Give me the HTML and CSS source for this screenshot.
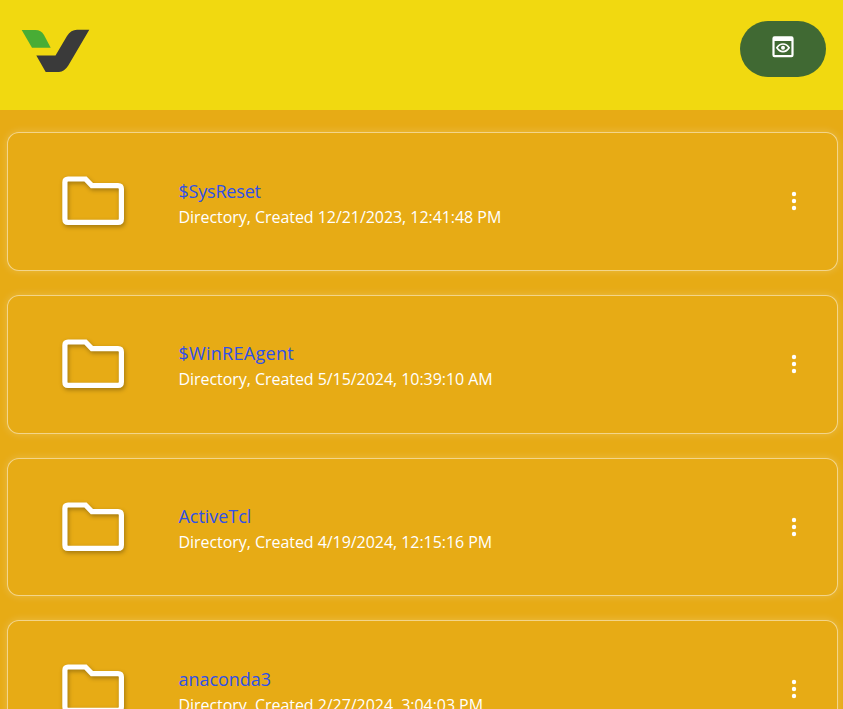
FILE: index.html
```html
<!DOCTYPE html>
<html lang="en">
<head>
<meta charset="utf-8">
<title>Files</title>
<link rel="stylesheet" href="styles.css">
</head>
<body>
<svg class="defs" width="0" height="0">
  <symbol id="folder" viewBox="0 0 62 50">
    <path d="M6 3H23.500L29.900 9.600H56Q59.400 9.600 59.400 13V43Q59.400 46.400 56 46.400H6Q2.900 46.400 2.900 43V6.300Q2.900 3 6 3Z" fill="none" stroke="#fff" stroke-width="5.200"/>
  </symbol>
  <symbol id="more" viewBox="0 0 6 20">
    <circle cx="3" cy="3" r="2.200"/><circle cx="3" cy="10" r="2.200"/><circle cx="3" cy="17" r="2.200"/>
  </symbol>
</svg>
<header class="header">
  <svg class="logo" viewBox="0 0 68 43">
    <path fill="#48ad35" d="M-.3 0H13.500Q19 0 22 5L28.700 17.800H10Z"/>
    <path fill="#3a3a3a" d="M14.300 25.500H33.500L45 6Q49 -.2 55 -.2H67.300L46.300 35.500Q42.300 41.900 37 41.900H23.700Z"/>
  </svg>
  <button class="preview" aria-label="Preview">
    <svg class="preview-icon" viewBox="0 0 22 22">
      <path fill="#fff" fill-rule="evenodd" d="M2.500 .300H19.500Q21.600 .300 21.600 2.500V19Q21.600 21.200 19.500 21.200H2.500Q.4 21.200 .4 19V2.500Q.4 .300 2.500 .300ZM2.600 5V19H19.400V5Z"/>
      <path fill="none" stroke="#fff" stroke-width="1.700" d="M4.900 11.800Q7.300 8 11 8T17.100 11.800Q14.700 15.600 11 15.600T4.900 11.800Z"/>
      <circle fill="#fff" cx="11" cy="11.800" r="2"/>
    </svg>
  </button>
</header>
<main class="list">
  <article class="card">
    <svg class="folder"><use href="#folder"/></svg>
    <div class="info"><a class="name tight">$SysReset</a><p class="meta">Directory, Created 12/21/2023, 12:41:48 PM</p></div>
    <svg class="more"><use href="#more"/></svg>
  </article>
  <article class="card">
    <svg class="folder"><use href="#folder"/></svg>
    <div class="info"><a class="name wide">$WinREAgent</a><p class="meta">Directory, Created 5/15/2024, 10:39:10 AM</p></div>
    <svg class="more"><use href="#more"/></svg>
  </article>
  <article class="card">
    <svg class="folder"><use href="#folder"/></svg>
    <div class="info"><a class="name">ActiveTcl</a><p class="meta">Directory, Created 4/19/2024, 12:15:16 PM</p></div>
    <svg class="more"><use href="#more"/></svg>
  </article>
  <article class="card">
    <svg class="folder"><use href="#folder"/></svg>
    <div class="info"><a class="name">anaconda3</a><p class="meta">Directory, Created 2/27/2024, 3:04:03 PM</p></div>
    <svg class="more"><use href="#more"/></svg>
  </article>
</main>
</body>
</html>
```

FILE: styles.css
```css
* { box-sizing: border-box; }
html, body { height: 100%; }
body {
  margin: 0;
  overflow: hidden;
  background: #e7ab15;
  font-family: "Open Sans", "Noto Sans", sans-serif;
  color: #fff;
}
.defs { display: none; }
.header {
  height: 110px;
  padding: 21px 17px 0 22px;
  display: flex;
  justify-content: space-between;
  align-items: flex-start;
  background: #f1d910;
}
.logo { width: 68px; height: 43px; margin-top: 9px; overflow: visible; }
.preview {
  width: 86px;
  height: 56px;
  padding: 0 0 5px;
  border: 0;
  border-radius: 28px;
  background: #406933;
  display: flex;
  align-items: center;
  justify-content: center;
}
.preview-icon { width: 22px; height: 22px; }
.list {
  padding: 22.4px 5px 0 7px;
  display: flex;
  flex-direction: column;
  gap: 24px;
}
.card {
  height: 138.670px;
  flex: none;
  padding: 0 40px 0 54px;
  display: flex;
  align-items: center;
  border: 1px solid rgba(255, 255, 255, .5);
  border-radius: 12px;
  background: #e7ab15;
  box-shadow: 0 0 8px rgba(255, 255, 255, .22);
}
.folder {
  width: 62px;
  height: 50px;
  margin-top: -1px;
  filter: drop-shadow(1px 2px 2px rgba(0, 0, 0, .3));
}
.info { flex: 1; margin: 4px 0 0 54.5px; white-space: nowrap; }
.name {
  display: block;
  font-size: 18px;
  line-height: 26px;
  letter-spacing: -.05px;
  color: #2f50e8;
}
.name.tight { letter-spacing: -.2px; }
.name.wide { letter-spacing: .28px; }
.meta { margin: 0; font-size: 16px; line-height: 26px; letter-spacing: -.05px; }
.more { width: 6px; height: 20px; margin-top: -1px; fill: #fff; }
```
